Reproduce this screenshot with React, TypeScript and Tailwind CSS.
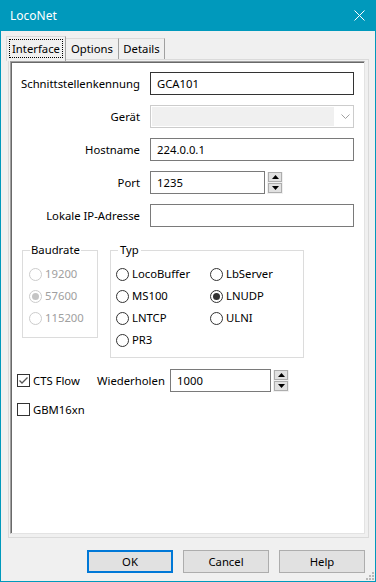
import React from "react";

const Radio = ({ label, checked, disabled }: { label: string; checked?: boolean; disabled?: boolean }) => (
  <div className="flex items-center h-[22px]">
    <span
      className={`w-[13px] h-[13px] rounded-full border bg-white flex items-center justify-center ${
        disabled ? "border-[#cccccc]" : "border-[#333333]"
      }`}
    >
      {checked && <span className={`w-[7px] h-[7px] rounded-full ${disabled ? "bg-[#c4c4c4]" : "bg-[#333333]"}`} />}
    </span>
    <span className={`ml-[3px] ${disabled ? "text-[#a0a0a0]" : "text-black"}`}>{label}</span>
  </div>
);

const Check = ({ label, checked }: { label: string; checked?: boolean }) => (
  <div className="flex items-center">
    <span className="w-[13px] h-[13px] border border-[#333333] bg-white flex items-center justify-center">
      {checked && (
        <svg width="11" height="11" viewBox="0 0 11 11">
          <path d="M1.5 5.5 L4 8 L9.5 2.5" fill="none" stroke="#555555" strokeWidth="1.3" />
        </svg>
      )}
    </span>
    <span className="ml-[3px]">{label}</span>
  </div>
);

const Spinner = () => (
  <div className="ml-[2px] w-[16px] h-[22px] bg-[#f0f0f0] flex flex-col gap-[1px] p-[1px] pt-0">
    <div className="flex-1 bg-[#e1e1e1] border border-[#adadad] flex items-center justify-center">
      <svg width="7" height="4" viewBox="0 0 7 4">
        <path d="M0 4 L3.5 0 L7 4 Z" fill="#000" />
      </svg>
    </div>
    <div className="flex-1 bg-[#e1e1e1] border border-[#adadad] flex items-center justify-center">
      <svg width="7" height="4" viewBox="0 0 7 4">
        <path d="M0 0 L7 0 L3.5 4 Z" fill="#000" />
      </svg>
    </div>
  </div>
);

const Row = ({ label, first, children }: { label: string; first?: boolean; children: React.ReactNode }) => (
  <div className={`flex items-center h-[23px] ${first ? "" : "mt-[10px]"}`}>
    <div className="w-[128px] text-right">{label}</div>
    <div className="ml-[10px] flex items-center">{children}</div>
  </div>
);

const Field = ({ value, w = "w-[204px]", dark }: { value?: string; w?: string; dark?: boolean }) => (
  <div className={`${w} h-[23px] bg-white border ${dark ? "border-[#333333]" : "border-[#7a7a7a]"} flex items-center pl-[6px]`}>
    {value}
  </div>
);

export default function App() {
  return (
    <div className="w-[376px] h-[582px] bg-[#0099bc] flex flex-col font-['Noto_Sans',sans-serif] text-[11.3px] text-black leading-none">
      <div className="h-[31px] flex items-center justify-between pl-[10px] pr-[11px] text-white text-[12px]">
        <span>LocoNet</span>
        <svg width="11" height="11" viewBox="0 0 11 11">
          <path d="M0.5 0.5 L10.5 10.5 M10.5 0.5 L0.5 10.5" stroke="#fff" strokeWidth="1" />
        </svg>
      </div>
      <div className="relative flex-1 mx-[1px] mb-[1px] bg-[#f0f0f0] pl-[7px] pr-[6px] pt-[5px] flex flex-col">
        <div className="flex items-end h-[23px] -ml-[2px]">
          <div className="relative z-10 w-[60px] h-[25px] -mb-[2px] bg-[#f0f0f0] border-t border-l border-[#dadada] border-r border-r-[#a0a0a0] flex items-start justify-center pt-[2px]">
            <span className="border border-dotted border-black px-[2px] py-[3px]">Interface</span>
          </div>
          <div className="w-[53px] h-[21px] bg-[#f0f0f0] border-t border-[#dadada] border-r border-r-[#a0a0a0] flex items-center justify-center">
            Options
          </div>
          <div className="w-[46px] h-[21px] bg-[#f0f0f0] border-t border-[#dadada] border-r border-r-[#a0a0a0] flex items-center justify-center">
            Details
          </div>
        </div>
        <div className="w-[361px] h-[479px] border border-[#dadada] bg-[#f0f0f0] pl-[1px] pt-[1px] pr-[3px] pb-[3px]">
          <div className="w-full h-full border-t border-l border-t-[#a0a0a0] border-l-[#a0a0a0] border-r border-b border-r-[#e3e3e3] border-b-[#e3e3e3]">
            <div className="w-full h-full bg-white border-t border-l border-[#696969] pt-[9px] flex flex-col">
              <Row label="Schnittstellenkennung" first>
                <Field value="GCA101" dark />
              </Row>
              <Row label="Gerät">
                <div className="w-[204px] h-[23px] bg-white border border-[#cccccc] flex items-center p-[1px]">
                  <div className="w-[182px] h-full bg-[#f0f0f0]" />
                  <svg className="ml-[7px]" width="9" height="5" viewBox="0 0 9 5">
                    <path d="M0.5 0.5 L4.5 4.5 L8.5 0.5" fill="none" stroke="#a0a0a0" strokeWidth="1" />
                  </svg>
                </div>
              </Row>
              <Row label="Hostname">
                <Field value="224.0.0.1" />
              </Row>
              <Row label="Port">
                <Field value="1235" w="w-[115px]" />
                <Spinner />
              </Row>
              <Row label="Lokale IP-Adresse">
                <Field />
              </Row>

              <div className="flex items-start mt-[23px] ml-[10px]">
                <div className="relative w-[76px] h-[88px] border border-[#dcdcdc] pl-[6px] pt-[12px]">
                  <span className="absolute -top-[7px] left-[7px] bg-white px-[1px]">Baudrate</span>
                  <Radio label="19200" disabled />
                  <Radio label="57600" checked disabled />
                  <Radio label="115200" disabled />
                </div>
                <div className="relative ml-[12px] w-[194px] h-[108px] border border-[#dcdcdc] pl-[5px] pt-[12px] grid grid-cols-[94px_1fr] content-start">
                  <span className="absolute -top-[7px] left-[7px] bg-white px-[2px]">Typ</span>
                  <Radio label="LocoBuffer" />
                  <Radio label="LbServer" />
                  <Radio label="MS100" />
                  <Radio label="LNUDP" checked />
                  <Radio label="LNTCP" />
                  <Radio label="ULNI" />
                  <Radio label="PR3" />
                </div>
              </div>

              <div className="flex items-center mt-[11px] ml-[5px] h-[23px]">
                <div className="w-[80px]">
                  <Check label="CTS Flow" checked />
                </div>
                <span className="w-[73px]">Wiederholen</span>
                <div className="flex items-center">
                  <Field value="1000" w="w-[101px]" />
                  <Spinner />
                </div>
              </div>
              <div className="mt-[11px] ml-[5px]">
                <Check label="GBM16xn" />
              </div>
            </div>
          </div>
        </div>
        <div className="flex justify-end gap-[10px] mt-[12px] pr-[4px]">
          <div className="w-[86px] h-[23px] bg-[#e1e1e1] border-2 border-[#0078d7] flex items-center justify-center">OK</div>
          <div className="w-[86px] h-[23px] bg-[#e1e1e1] border border-[#adadad] flex items-center justify-center">Cancel</div>
          <div className="w-[86px] h-[23px] bg-[#e1e1e1] border border-[#adadad] flex items-center justify-center">Help</div>
        </div>
        <svg className="absolute right-[1px] bottom-[1px]" width="9" height="9" viewBox="0 0 9 9">
          <rect x="7" y="1" width="2" height="2" fill="#b8b8b8" />
          <rect x="4" y="4" width="2" height="2" fill="#b8b8b8" />
          <rect x="7" y="4" width="2" height="2" fill="#b8b8b8" />
          <rect x="1" y="7" width="2" height="2" fill="#b8b8b8" />
          <rect x="4" y="7" width="2" height="2" fill="#b8b8b8" />
          <rect x="7" y="7" width="2" height="2" fill="#b8b8b8" />
        </svg>
      </div>
    </div>
  );
}
